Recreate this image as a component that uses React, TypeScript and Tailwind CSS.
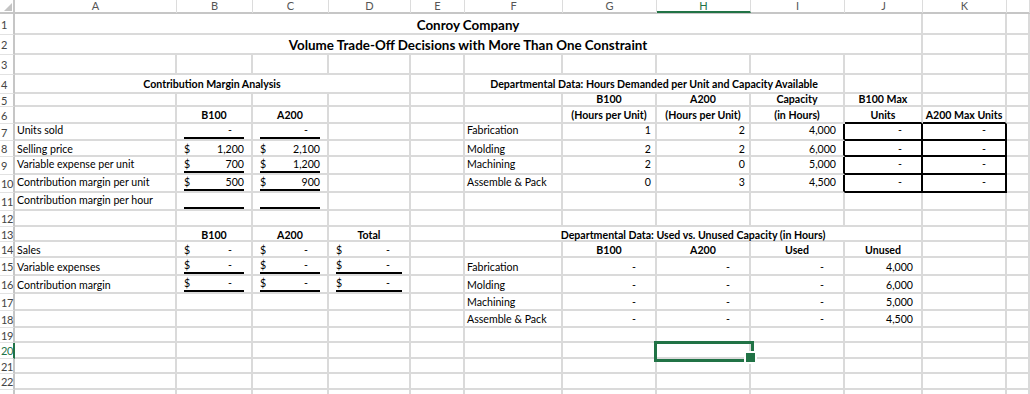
import React from 'react';

// column tracks for A..K plus the cut-off L column
const GRID = 'grid grid-cols-[162px_76px_76px_82px_54px_98px_94px_94px_94px_78px_84px_1fr]';

type Kind = 'l' | 'c' | 't' | 'r' | 'd' | '$' | 'u';
type Cell = { t?: string; k?: Kind; s?: number; pr?: string; x?: string };

const E: Cell = {};
const blank = (n: number): Cell[] => Array.from({ length: n }, () => E);

const spanCls: Record<number, string> = { 4: 'col-span-4', 5: 'col-span-5', 10: 'col-span-10' };

const BOX = 'border-black';
const BOX_L = 'border-r-black border-b-[#dadada]';
const BOX_T = 'border-b-black border-r-[#dadada]';

const rows: { n: number; h: string; pb: string; lead?: string; cells: Cell[] }[] = [
  { n: 1, h: 'h-[21px]', pb: 'pb-0', cells: [{ k: 't', t: 'Conroy Company', s: 10 }, E, E] },
  { n: 2, h: 'h-[20px]', pb: 'pb-0', cells: [{ k: 't', t: 'Volume Trade-Off Decisions with More Than One Constraint', s: 10 }, E, E] },
  { n: 3, h: 'h-[20px]', pb: 'pb-0', cells: blank(12) },
  {
    n: 4, h: 'h-[19px]', pb: 'pb-[1px]', cells: [
      { k: 'c', t: 'Contribution Margin Analysis', s: 4 }, E,
      { k: 'c', t: 'Departmental Data: Hours Demanded per Unit and Capacity Available', s: 4 }, E, E, E,
    ],
  },
  {
    n: 5, h: 'h-[13px]', pb: 'pb-0', lead: 'leading-[11px]', cells: [
      ...blank(6), { k: 'c', t: 'B100' }, { k: 'c', t: 'A200' }, { k: 'c', t: 'Capacity' }, { k: 'c', t: 'B100 Max' }, E, E,
    ],
  },
  {
    n: 6, h: 'h-[17px]', pb: 'pb-0', cells: [
      E, { k: 'c', t: 'B100' }, { k: 'c', t: 'A200' }, E, E, E,
      { k: 'c', t: '(Hours per Unit)' }, { k: 'c', t: '(Hours per Unit)' }, { k: 'c', t: '(in Hours)' },
      { k: 'c', t: 'Units', x: BOX_T }, { k: 'c', t: 'A200 Max Units', x: BOX_T }, E,
    ],
  },
  {
    n: 7, h: 'h-[17px]', pb: 'pb-[2px]', cells: [
      { k: 'l', t: 'Units sold' }, { k: 'u', t: '-' }, { k: 'u', t: '-' }, E, E, { k: 'l', t: 'Fabrication' },
      { k: 'r', t: '1', pr: 'pr-[4px]' }, { k: 'r', t: '2', pr: 'pr-[4px]' }, { k: 'r', t: '4,000', pr: 'pr-[7px]', x: BOX_L },
      { k: 'd', x: BOX }, { k: 'd', x: BOX }, E,
    ],
  },
  {
    n: 8, h: 'h-[16px]', pb: 'pb-0', lead: 'leading-[11px]', cells: [
      { k: 'l', t: 'Selling price' }, { k: '$', t: '1,200' }, { k: '$', t: '2,100' }, E, E, { k: 'l', t: 'Molding' },
      { k: 'r', t: '2', pr: 'pr-[4px]' }, { k: 'r', t: '2', pr: 'pr-[4px]' }, { k: 'r', t: '6,000', pr: 'pr-[7px]', x: BOX_L },
      { k: 'd', x: BOX }, { k: 'd', x: BOX }, E,
    ],
  },
  {
    n: 9, h: 'h-[18px]', pb: 'pb-[2px]', cells: [
      { k: 'l', t: 'Variable expense per unit' }, { k: 'u', t: '700' }, { k: 'u', t: '1,200' }, E, E, { k: 'l', t: 'Machining' },
      { k: 'r', t: '2', pr: 'pr-[4px]' }, { k: 'r', t: '0', pr: 'pr-[4px]' }, { k: 'r', t: '5,000', pr: 'pr-[7px]', x: BOX_L },
      { k: 'd', x: BOX }, { k: 'd', x: BOX }, E,
    ],
  },
  {
    n: 10, h: 'h-[18px]', pb: 'pb-[2px]', cells: [
      { k: 'l', t: 'Contribution margin per unit' }, { k: 'u', t: '500' }, { k: 'u', t: '900' }, E, E, { k: 'l', t: 'Assemble & Pack' },
      { k: 'r', t: '0', pr: 'pr-[4px]' }, { k: 'r', t: '3', pr: 'pr-[4px]' }, { k: 'r', t: '4,500', pr: 'pr-[7px]', x: BOX_L },
      { k: 'd', x: BOX }, { k: 'd', x: BOX }, E,
    ],
  },
  {
    n: 11, h: 'h-[18px]', pb: 'pb-[2px]', cells: [
      { k: 'l', t: 'Contribution margin per hour' }, { k: 'u' }, { k: 'u' }, ...blank(9),
    ],
  },
  { n: 12, h: 'h-[16px]', pb: 'pb-0', cells: blank(12) },
  {
    n: 13, h: 'h-[15px]', pb: 'pb-0', lead: 'leading-[10px]', cells: [
      E, { k: 'c', t: 'B100' }, { k: 'c', t: 'A200' }, { k: 'c', t: 'Total' }, E,
      { k: 'c', t: 'Departmental Data: Used vs. Unused Capacity (in Hours)', s: 5 }, E, E,
    ],
  },
  {
    n: 14, h: 'h-[16px]', pb: 'pb-0', lead: 'leading-[11px]', cells: [
      { k: 'l', t: 'Sales' }, { k: '$', t: '-' }, { k: '$', t: '-' }, { k: '$', t: '-' }, E, E,
      { k: 'c', t: 'B100' }, { k: 'c', t: 'A200' }, { k: 'c', t: 'Used' }, { k: 'c', t: 'Unused' }, E, E,
    ],
  },
  {
    n: 15, h: 'h-[18px]', pb: 'pb-0', cells: [
      { k: 'l', t: 'Variable expenses' }, { k: 'u', t: '$-' }, { k: 'u', t: '$-' }, { k: 'u', t: '$-' }, E, { k: 'l', t: 'Fabrication' },
      { k: 'd' }, { k: 'd' }, { k: 'd' }, { k: 'r', t: '4,000', pr: 'pr-[8px]' }, E, E,
    ],
  },
  {
    n: 16, h: 'h-[18px]', pb: 'pb-0', cells: [
      { k: 'l', t: 'Contribution margin' }, { k: 'u', t: '$-' }, { k: 'u', t: '$-' }, { k: 'u', t: '$-' }, E, { k: 'l', t: 'Molding' },
      { k: 'd' }, { k: 'd' }, { k: 'd' }, { k: 'r', t: '6,000', pr: 'pr-[8px]' }, E, E,
    ],
  },
  {
    n: 17, h: 'h-[17px]', pb: 'pb-0', cells: [
      ...blank(5), { k: 'l', t: 'Machining' }, { k: 'd' }, { k: 'd' }, { k: 'd' }, { k: 'r', t: '5,000', pr: 'pr-[8px]' }, E, E,
    ],
  },
  {
    n: 18, h: 'h-[17px]', pb: 'pb-0', cells: [
      ...blank(5), { k: 'l', t: 'Assemble & Pack' }, { k: 'd' }, { k: 'd' }, { k: 'd' }, { k: 'r', t: '4,500', pr: 'pr-[8px]' }, E, E,
    ],
  },
  { n: 19, h: 'h-[15px]', pb: 'pb-0', cells: blank(12) },
  { n: 20, h: 'h-[16px]', pb: 'pb-0', cells: blank(12) },
  { n: 21, h: 'h-[15px]', pb: 'pb-0', cells: blank(12) },
  { n: 22, h: 'h-[16px]', pb: 'pb-0', cells: blank(12) },
  { n: 23, h: 'h-[16px]', pb: 'pb-0', cells: blank(12) },
];

const Dash = () => <span className="mr-[12px]">-</span>;

function CellView({ c, pb }: { c: Cell; pb: string }) {
  const color = c.x ?? 'border-[#dadada]';
  const span = c.s ? spanCls[c.s] : '';
  let inner: React.ReactNode = null;

  switch (c.k) {
    case 'l':
      inner = <span className="whitespace-nowrap pl-[2px]">{c.t}</span>;
      break;
    case 'c':
      inner = <span className="w-full whitespace-nowrap text-center font-bold">{c.t}</span>;
      break;
    case 't':
      inner = <span className="w-full whitespace-nowrap text-center text-[13.4px] font-bold leading-[16px]">{c.t}</span>;
      break;
    case 'r':
      inner = <span className={`w-full text-right ${c.pr}`}>{c.t}</span>;
      break;
    case 'd':
      inner = <span className="w-full pr-[19px] text-right">-</span>;
      break;
    case '$':
      inner = (
        <div className="mx-[7px] flex flex-1 justify-between">
          <span>$</span>
          {c.t === '-' ? <Dash /> : <span>{c.t}</span>}
        </div>
      );
      break;
    case 'u':
      inner = (
        <div className="mx-[7px] flex h-[15px] flex-1 items-start justify-between border-b-2 border-black">
          {c.t === '$-' ? (
            <>
              <span>$</span>
              <Dash />
            </>
          ) : c.t === '-' ? (
            <>
              <span />
              <Dash />
            </>
          ) : c.t ? (
            <>
              <span>$</span>
              <span>{c.t}</span>
            </>
          ) : null}
        </div>
      );
      break;
  }

  return (
    <div className={`flex min-w-0 items-end overflow-visible border-r-2 border-b-2 ${color} ${span} ${c.k === 'u' ? 'pb-0' : pb}`}>
      {inner}
    </div>
  );
}

const letters = ['A', 'B', 'C', 'D', 'E', 'F', 'G', 'H', 'I', 'J', 'K', ''];

export default function App() {
  return (
    <div className="relative h-[394px] w-[1030px] overflow-hidden bg-white font-['Lato',sans-serif] text-[10.6px] leading-[13px] text-black">
      {/* column headers */}
      <div className="flex h-[14px] border-b-2 border-[#c6c6c6]">
        <div className="flex w-[15px] shrink-0 items-end justify-end border-r-2 border-[#c6c6c6] pr-[1px] pb-[1px]">
          <svg width="8" height="8" viewBox="0 0 8 8">
            <polygon points="8,0 8,8 0,8" fill="#c4c4c4" />
          </svg>
        </div>
        <div className={`${GRID} flex-1`}>
          {letters.map((l, i) => (
            <div
              key={i}
              className={`flex items-start justify-center border-r border-[#dcdcdc] text-[11px] leading-[11px] ${l === 'H' ? 'border-b-2 border-b-[#217346] text-[#217346]' : 'text-[#555]'}`}
            >
              {l}
            </div>
          ))}
        </div>
      </div>

      {rows.map(r => (
        <div key={r.n} className={`flex ${r.h} ${r.lead ?? ''}`}>
          <div
            className={`flex w-[15px] shrink-0 items-center border-r-2 border-b border-b-[#e2e2e2] pl-[1px] text-[11px] leading-[11px] tracking-[-0.5px] ${r.n === 20 ? 'border-r-[#217346] text-[#217346]' : 'border-r-[#c6c6c6] text-[#444]'}`}
          >
            {r.n < 23 ? r.n : ''}
          </div>
          <div className={`${GRID} flex-1`}>
            {r.cells.map((c, i) => (
              <CellView key={i} c={c} pb={r.pb} />
            ))}
          </div>
        </div>
      ))}

      {/* active cell H20 */}
      <div className="absolute left-[654px] top-[341px] h-[21px] w-[100px] border-[3px] border-[#217346]" />
      <div className="absolute left-[746px] top-[353px] h-[9px] w-[9px] bg-[#217346] outline-2 outline-white" />
    </div>
  );
}
